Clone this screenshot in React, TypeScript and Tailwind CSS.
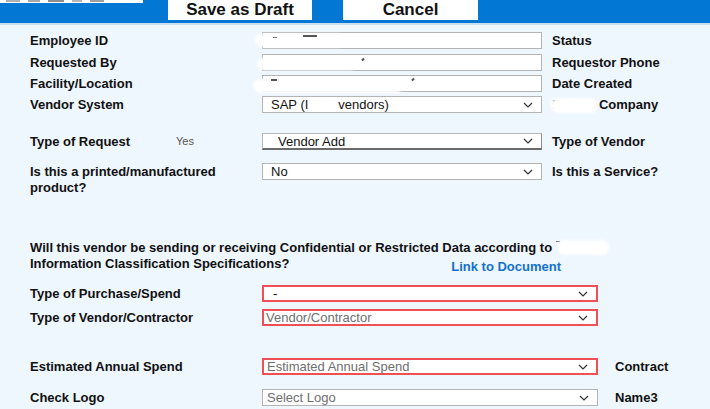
import type { ReactNode } from "react";

const font = "font-['Liberation_Sans',Arial,sans-serif]";

function Chevron() {
  return (
    <svg width="10" height="6" viewBox="0 0 10 6" className="shrink-0">
      <path d="M1 1l4 4 4-4" fill="none" stroke="#333" strokeWidth="1.2" />
    </svg>
  );
}

function Label({ children, className = "" }: { children: ReactNode; className?: string }) {
  return <span className={`text-[13px] font-bold leading-4 text-[#111] ${className}`}>{children}</span>;
}

// white smudge used where the original values were redacted
function Blur({ className }: { className: string }) {
  return <span className={`absolute rounded-full bg-white blur-[1.5px] ${className}`} />;
}

function TextBox({ children }: { children?: ReactNode }) {
  return (
    <div className="relative h-[17px] w-[280px] shrink-0 border border-[#b4b4b4] bg-white">{children}</div>
  );
}

type SelectProps = {
  value: ReactNode;
  wide?: boolean;
  red?: boolean;
  muted?: boolean;
  raised?: boolean;
  pad?: string;
};

function Select({ value, wide, red, muted, raised, pad = "pl-2" }: SelectProps) {
  const border = red
    ? "border-2 border-[#ef4f55]"
    : raised
      ? "border border-[#b8b8b8] border-b-2 border-b-[#6b6b6b] border-r-[#8c8c8c]"
      : "border border-[#b4b4b4]";
  return (
    <div
      className={`flex h-[17px] shrink-0 items-center justify-between bg-white pr-2 ${pad} ${border} ${
        wide ? "w-[336px]" : "w-[280px]"
      }`}
    >
      <span className={`flex items-center text-[13px] leading-none ${muted ? "text-[#6f6f6f]" : "text-[#111]"}`}>
        {value}
      </span>
      <Chevron />
    </div>
  );
}

export default function App() {
  return (
    <div className={`${font} min-h-[409px] w-[710px] overflow-hidden bg-[#eef6fe]`}>
      {/* header bar */}
      <div className="flex h-[25px] items-start border-b-2 border-[#c7def3] bg-[#0277d3]">
        <div className="flex h-[3px] w-[143px] gap-[8px] bg-white px-[6px]">
          <span className="h-[2px] w-[14px] bg-[#b0b0b0]" />
          <span className="h-[2px] w-[12px] bg-[#a8a8a8]" />
          <span className="h-[2px] w-[16px] bg-[#8f8f8f]" />
          <span className="h-[2px] w-[10px] bg-[#b5b5b5]" />
          <span className="h-[2px] w-[14px] bg-[#a0a0a0]" />
        </div>
        <div className="ml-[25px] flex h-[20px] w-[144px] items-center justify-center bg-white text-[17px] font-bold text-[#111]">
          Save as Draft
        </div>
        <div className="ml-[31px] flex h-[20px] w-[135px] items-center justify-center bg-white text-[17px] font-bold text-[#111]">
          Cancel
        </div>
      </div>

      <div className="pl-[30px] pt-[7px]">
        <div className="flex items-center">
          <Label className="w-[232px] shrink-0">Employee ID</Label>
          <TextBox>
            <Blur className="-left-[8px] top-[1px] h-[13px] w-[90px]" />
            <span className="absolute left-[10px] top-[4px] h-[1px] w-[4px] bg-[#777]" />
            <span className="absolute left-[40px] top-[2px] h-[2px] w-[14px] bg-[#555]" />
          </TextBox>
          <Label className="ml-[10px]">Status</Label>
        </div>
        <div className="mt-[5px] flex items-center">
          <Label className="w-[232px] shrink-0">Requested By</Label>
          <TextBox>
            <Blur className="-left-[6px] top-[3px] h-[12px] w-[100px]" />
            <span className="absolute left-[99px] top-[3px] h-[3px] w-[2px] rotate-45 bg-[#555]" />
          </TextBox>
          <Label className="ml-[10px]">Requestor Phone</Label>
        </div>
        <div className="mt-[4px] flex items-center">
          <Label className="w-[232px] shrink-0">Facility/Location</Label>
          <TextBox>
            <Blur className="-left-[10px] top-[3px] h-[14px] w-[150px]" />
            <span className="absolute left-[8px] top-[3px] h-[2px] w-[6px] bg-[#555]" />
            <span className="absolute left-[149px] top-[2px] h-[3px] w-[2px] rotate-45 bg-[#555]" />
          </TextBox>
          <Label className="ml-[10px]">Date Created</Label>
        </div>
        <div className="mt-[4px] flex items-center">
          <Label className="w-[232px] shrink-0">Vendor System</Label>
          <Select
            value={
              <>
                SAP (I<span className="inline-block w-[30px]" />vendors)
              </>
            }
          />
          <span className="relative ml-[10px] text-[13px] font-bold leading-4 text-[#111]">
            <span className="text-[#333]">Dat</span>
            <Blur className="-left-[2px] top-[1px] h-[15px] w-[48px]" />
            <span className="ml-[26px]">Company</span>
          </span>
        </div>

        <div className="mt-[20px] flex items-center">
          <div className="flex w-[232px] shrink-0 items-center">
            <Label className="w-[146px] shrink-0">Type of Request</Label>
            <span className="text-[11px] text-[#555]">Yes</span>
          </div>
          <Select value="Vendor Add" raised pad="pl-[15px]" />
          <Label className="ml-[10px]">Type of Vendor</Label>
        </div>

        <div className="mt-[14px] flex items-start">
          <Label className="w-[200px] shrink-0">Is this a printed/manufactured product?</Label>
          <div className="ml-[32px] mt-[-1px]">
            <Select value="No" />
          </div>
          <Label className="ml-[10px]">Is this a Service?</Label>
        </div>

        <div className="mt-[44px]">
          <div className="flex items-center whitespace-nowrap text-[13px] font-bold leading-4 text-[#111]">
            Will this vendor be sending or receiving Confidential or Restricted Data according to
            <span className="relative ml-[4px] inline-block h-[12px] w-[52px]">
              <span className="absolute left-0 top-[-1px] h-[1px] w-[4px] bg-[#777]" />
              <Blur className="left-[1px] top-[-2px] h-[15px] w-[52px]" />
            </span>
          </div>
          <div className="flex w-[531px] items-end justify-between">
            <Label>Information Classification Specifications?</Label>
            <span className="translate-y-[3px] text-[13px] font-bold leading-4 text-[#1371cc]">Link to Document</span>
          </div>
        </div>

        <div className="mt-[13px] flex items-center">
          <Label className="w-[232px] shrink-0">Type of Purchase/Spend</Label>
          <Select value="-" wide red pad="pl-[9px]" />
        </div>
        <div className="mt-[7px] flex items-center">
          <Label className="w-[232px] shrink-0">Type of Vendor/Contractor</Label>
          <Select value="Vendor/Contractor" wide red muted pad="pl-[2px]" />
        </div>
        <div className="mt-[32px] flex items-center">
          <Label className="w-[232px] shrink-0">Estimated Annual Spend</Label>
          <Select value="Estimated Annual Spend" wide red muted pad="pl-[3px]" />
          <Label className="ml-[17px]">Contract</Label>
        </div>
        <div className="mt-[14px] flex items-center">
          <Label className="w-[232px] shrink-0">Check Logo</Label>
          <Select value="Select Logo" wide muted pad="pl-[4px]" />
          <Label className="ml-[17px]">Name3</Label>
        </div>
      </div>
    </div>
  );
}
